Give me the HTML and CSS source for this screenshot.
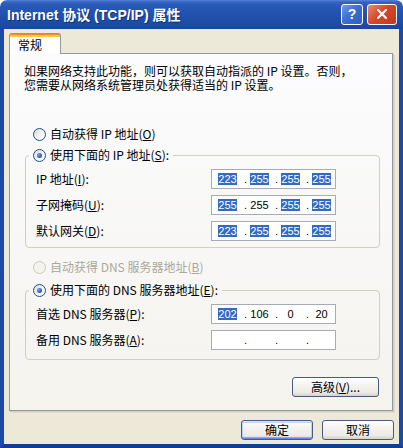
FILE: index.html
```html
<!DOCTYPE html>
<html lang="zh-CN">
<head>
<meta charset="utf-8">
<title>Internet 协议 (TCP/IP) 属性</title>
<link rel="stylesheet" href="styles.css">
</head>
<body>
<div class="window">
  <div class="titlebar">
    <span class="title">Internet 协议 (TCP/IP) 属性</span>
    <div class="tbtns">
      <span class="tb help">?</span>
      <span class="tb close"><svg width="10" height="10" viewBox="0 0 10 10"><path d="M1 1L9 9M9 1L1 9" stroke="#fff" stroke-width="2.2" stroke-linecap="square"/></svg></span>
    </div>
  </div>
  <div class="client">
    <div class="tabs"><div class="tab">常规</div></div>
    <div class="panel">
      <p class="desc">如果网络支持此功能，则可以获取自动指派的 IP 设置。否则，<br>您需要从网络系统管理员处获得适当的 IP 设置。</p>

      <div class="radio-row first"><span class="radio"></span><span>自动获得 IP 地址(<u>O</u>)</span></div>

      <fieldset class="group g1">
        <legend><span class="radio checked"></span><span>使用下面的 IP 地址(<u>S</u>):</span></legend>
        <div class="row"><span class="lbl">IP 地址(<u>I</u>):</span>
          <div class="ip"><span class="seg sel">223</span><span class="dot">.</span><span class="seg sel">255</span><span class="dot">.</span><span class="seg sel">255</span><span class="dot">.</span><span class="seg sel">255</span></div>
        </div>
        <div class="row"><span class="lbl">子网掩码(<u>U</u>):</span>
          <div class="ip"><span class="seg sel">255</span><span class="dot">.</span><span class="seg">255</span><span class="dot">.</span><span class="seg sel">255</span><span class="dot">.</span><span class="seg sel">255</span></div>
        </div>
        <div class="row"><span class="lbl">默认网关(<u>D</u>):</span>
          <div class="ip"><span class="seg sel">223</span><span class="dot">.</span><span class="seg sel">255</span><span class="dot">.</span><span class="seg sel">255</span><span class="dot">.</span><span class="seg sel">255</span></div>
        </div>
      </fieldset>

      <div class="radio-row dns-auto disabled"><span class="radio"></span><span>自动获得 DNS 服务器地址(<u>B</u>)</span></div>

      <fieldset class="group g2">
        <legend><span class="radio checked"></span><span>使用下面的 DNS 服务器地址(<u>E</u>):</span></legend>
        <div class="row"><span class="lbl">首选 DNS 服务器(<u>P</u>):</span>
          <div class="ip"><span class="seg sel">202</span><span class="dot">.</span><span class="seg">106</span><span class="dot">.</span><span class="seg">0</span><span class="dot">.</span><span class="seg">20</span></div>
        </div>
        <div class="row"><span class="lbl">备用 DNS 服务器(<u>A</u>):</span>
          <div class="ip"><span class="seg"></span><span class="dot">.</span><span class="seg"></span><span class="dot">.</span><span class="seg"></span><span class="dot">.</span><span class="seg"></span></div>
        </div>
      </fieldset>

      <div class="adv-row"><button class="btn adv">高级(<u>V</u>)...</button></div>
    </div>
    <div class="footer">
      <button class="btn default">确定</button>
      <button class="btn">取消</button>
    </div>
  </div>
</div>
</body>
</html>
```

FILE: styles.css
```css
* { box-sizing: border-box; }
html, body { margin: 0; padding: 0; background: #ffffff; }
body {
  width: 403px;
  height: 448px;
  font-family: "Noto Sans CJK SC", "Liberation Sans", sans-serif;
  font-size: 12px;
  color: #000;
}
u { text-decoration: underline; text-underline-offset: 1px; }

.window {
  width: 403px;
  height: 448px;
  display: flex;
  flex-direction: column;
}

/* Title bar */
.titlebar {
  height: 29px;
  flex: none;
  display: flex;
  align-items: center;
  justify-content: space-between;
  padding: 0 6px 0 7px;
  border-radius: 7px 7px 0 0;
  background: linear-gradient(#5585d8 0, #3565c0 2px, #2a5ab8 5px, #2152ae 50%, #1d4aa3 85%, #1a459c 100%);
}
.title {
  color: #fff;
  font-family: "Liberation Sans", "Noto Sans CJK SC", sans-serif;
  font-weight: bold;
  font-size: 14px;
  line-height: 16px;
  text-shadow: 1px 1px 0 #0f2f78;
}
.tbtns { display: flex; gap: 4px; align-items: center; margin-top: -1px; }
.tb {
  height: 21px;
  border: 1px solid #fff;
  border-radius: 3px;
  display: flex;
  align-items: center;
  justify-content: center;
  color: #fff;
}
.help {
  width: 22px;
  font-family: "Liberation Sans", sans-serif;
  font-weight: bold;
  font-size: 14px;
  background: linear-gradient(135deg, #6f9be6 0%, #3d6fcf 45%, #2d5ec2 100%);
}
.close {
  width: 30px;
  background: linear-gradient(135deg, #ee8a6c 0%, #d5472a 45%, #c23a20 100%);
}

/* Client */
.client {
  flex: 1;
  background: #ece9d8;
  border-left: 4px solid #1c4aa5;
  border-right: 4px solid #1c4aa5;
  border-bottom: 4px solid #143c92;
  padding-top: 4px;
  display: flex;
  flex-direction: column;
}

.tabs {
  height: 20px;
  padding-left: 5px;
  display: flex;
  position: relative;
  z-index: 1;
}
.tab {
  width: 52px;
  height: 21px;
  border: 1px solid #919b9c;
  border-bottom: none;
  border-radius: 3px 3px 0 0;
  background: linear-gradient(#e68b2c 0 1px, #ffc83c 1px 3px, #ffffff 3px);
  padding: 3px 0 0 8px;
  line-height: 16px;
}

.panel {
  margin-left: 5px;
  width: 384px;
  height: 358px;
  border: 1px solid #919b9c;
  box-shadow: 1px 1px 0 #d0cebf, 2px 2px 0 #e0ddd0;
  background: linear-gradient(#fcfcfe, #f4f3ee);
  display: flex;
  flex-direction: column;
}

.desc {
  margin: 10px 0 0 14px;
  line-height: 14px;
  white-space: nowrap;
}

.radio-row {
  height: 16px;
  display: flex;
  align-items: center;
  margin-left: 23px;
  line-height: 16px;
}
.radio-row.first { margin-top: 34px; }
.radio-row.dns-auto { margin-top: 11px; }

.radio {
  width: 13px;
  height: 13px;
  flex: none;
  border-radius: 50%;
  border: 1px solid #1c5180;
  background: linear-gradient(135deg, #dcdcd7 0%, #f3f3ef 55%, #ffffff 100%);
  margin-right: 4px;
  position: relative;
}
.radio.checked::after {
  content: "";
  position: absolute;
  left: 3px;
  top: 3px;
  width: 5px;
  height: 5px;
  border-radius: 50%;
  background: radial-gradient(circle at 35% 35%, #7fa2e6 0%, #2d5cc0 60%, #1e46a0 100%);
}
.disabled { color: #aca899; }
.disabled .radio { border-color: #cac8bb; background: #f4f3ee; }

.group {
  margin: 5px 0 0 15px;
  width: 355px;
  border: 1px solid #d0d0bf;
  border-radius: 4px;
  padding: 6px 0 6px 3px;
  min-width: 0;
}
.group.g2 { margin-top: 7px; padding-bottom: 9px; }
.group legend {
  padding: 0 4px;
  height: 16px;
  line-height: 16px;
  display: flex;
  align-items: center;
}

.row {
  display: flex;
  align-items: center;
  height: 20px;
  margin-left: 7px;
}
.row + .row { margin-top: 6px; }
.lbl { width: 175px; line-height: 16px; }

.ip {
  width: 125px;
  height: 20px;
  border: 1px solid #a5acb5;
  background: #fff;
  display: flex;
  align-items: center;
  padding-left: 6px;
  font-family: "Liberation Sans", sans-serif;
  font-size: 11px;
}
.seg {
  width: 19px;
  height: 12px;
  line-height: 12px;
  text-align: center;
}
.seg.sel { background: #316ac5; color: #fff; }
.dot {
  width: 12px;
  line-height: 12px;
  padding-left: 6px;
}
.dot:nth-child(2) { width: 13px; padding-left: 7px; }

.adv-row {
  margin-top: 17px;
  display: flex;
  justify-content: flex-end;
  padding-right: 13px;
}

.btn {
  font-family: "Noto Sans CJK SC", "Liberation Sans", sans-serif;
  font-size: 12px;
  color: #000;
  height: 20px;
  padding: 0;
  line-height: 16px;
  border: 1px solid #4a5a78;
  border-radius: 3px;
  background: linear-gradient(#ffffff 0%, #f4f3ef 40%, #ecebe6 80%, #d6d0c5 100%);
}
.btn.adv { width: 87px; }

.footer {
  margin-top: 9px;
  display: flex;
  justify-content: flex-end;
  gap: 9px;
  padding-right: 5px;
}
.footer .btn { width: 72px; }
.btn.default {
  box-shadow: inset 0 1px 0 #cee7ff, inset 0 -1px 0 #6982ee, inset 1px 0 0 #b8d3fb, inset -1px 0 0 #b8d3fb, inset 0 2px 0 #bcd4f6, inset 0 -2px 0 #89adf0;
}
```
